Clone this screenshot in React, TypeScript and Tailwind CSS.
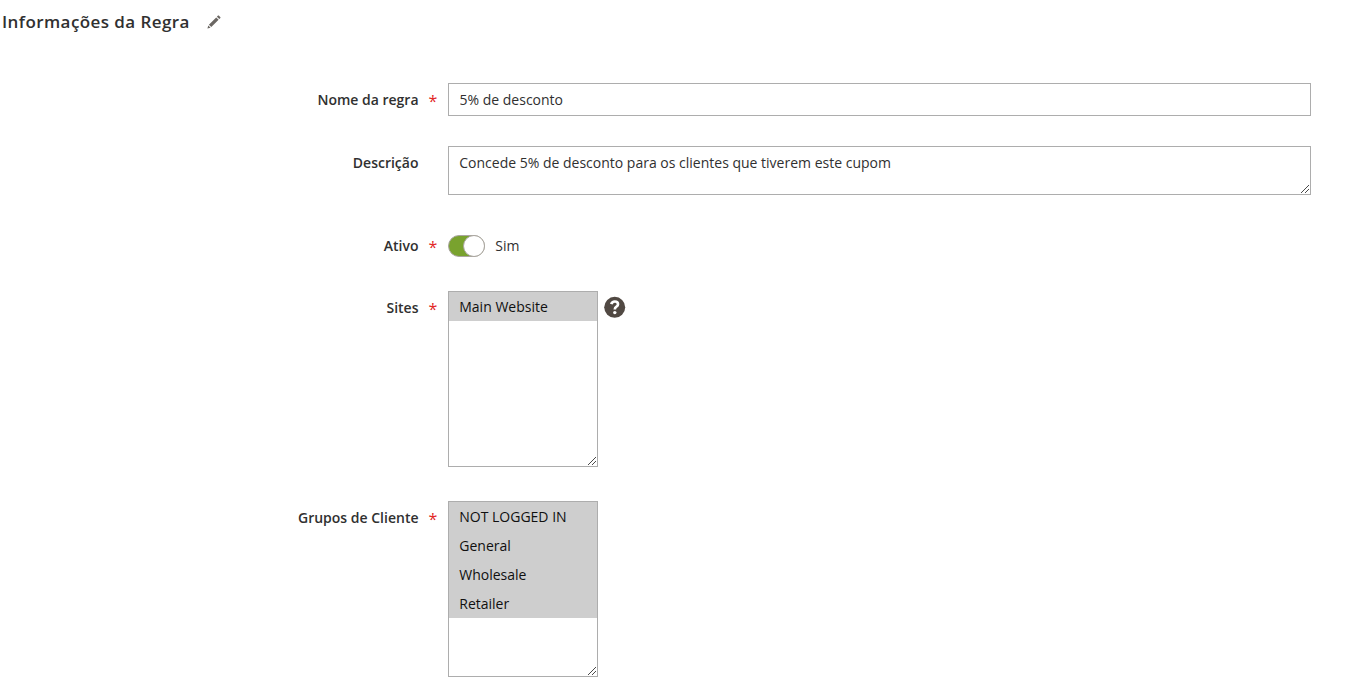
import React from "react";

function Grip() {
  return (
    <svg
      className="pointer-events-none absolute right-0 bottom-0"
      width="9"
      height="9"
      viewBox="0 0 9 9"
      shapeRendering="crispEdges"
      fill="#4a4a4a"
      aria-hidden="true"
    >
      {[0, 1, 2, 3, 4, 5, 6, 7].map((i) => (
        <rect key={i} x={i} y={7 - i} width="1" height="1" />
      ))}
      {[0, 1, 2, 3].map((i) => (
        <rect key={`s${i}`} x={4 + i} y={7 - i} width="1" height="1" />
      ))}
    </svg>
  );
}

type FieldProps = {
  label: string;
  required?: boolean;
  className: string;
  labelClass: string;
  children: React.ReactNode;
};

function Field({ label, required, className, labelClass, children }: FieldProps) {
  return (
    <div className={`flex items-start ${className}`}>
      <div className={`flex w-[448px] shrink-0 justify-end leading-[19px] font-semibold ${labelClass}`}>
        <span>{label}</span>
        <span className="w-[29.5px] pt-[2px] pl-[10px] text-[16px] leading-[19px] font-normal text-[#e22626]">
          {required ? "*" : ""}
        </span>
      </div>
      {children}
    </div>
  );
}

function ListBox({ label, options }: { label: string; options: string[] }) {
  return (
    <div
      role="listbox"
      aria-label={label}
      aria-multiselectable="true"
      className="relative h-[176px] w-[150px] border border-[#adadad] bg-white"
    >
      {options.map((option) => (
        <div
          key={option}
          role="option"
          aria-selected="true"
          className="h-[29px] bg-[#cecece] pl-[10.25px] leading-[29px] text-[#101010]"
        >
          {option}
        </div>
      ))}
      <Grip />
    </div>
  );
}

export default function App() {
  return (
    <main className="h-[685px] w-[1352px] overflow-hidden bg-white font-['Open_Sans',sans-serif] text-[14px] text-[#303030]">
      <header className="flex h-[44px] items-center pl-[2px]">
        <h1 className="text-[17px] leading-[24px] font-semibold tracking-[0.425px]">Informações da Regra</h1>
        <svg className="ml-[17px]" width="14" height="14" viewBox="0 0 14 14" fill="#6b6763" aria-hidden="true">
          <path d="M.4 13.6 1.3 10.5 3.5 12.7ZM1.9 9.7 9.2 2.4 11.6 4.8 4.3 12.1ZM9.9 1.7 11 .6Q11.4 .3 11.8.6L13.4 2.2Q13.7 2.6 13.4 3L12.3 4.1Z" />
        </svg>
      </header>

      <Field label="Nome da regra" required className="mt-[39px]" labelClass="pt-[7px]">
        <input
          aria-label="Nome da regra"
          defaultValue="5% de desconto"
          className="h-[33px] w-[863px] border border-[#adadad] bg-white px-[10.5px] pb-px leading-[19px] outline-none"
        />
      </Field>

      <Field label="Descrição" className="mt-[30px]" labelClass="pt-[7px]">
        <div className="relative flex h-[49px] w-[863px] border border-[#adadad]">
          <textarea
            aria-label="Descrição"
            defaultValue="Concede 5% de desconto para os clientes que tiverem este cupom"
            className="h-full w-full resize-none overflow-hidden bg-transparent px-[10.25px] pt-[6px] leading-[19px] outline-none"
          />
          <Grip />
        </div>
      </Field>

      <Field label="Ativo" required className="mt-[40px]" labelClass="pt-px">
        <div className="flex h-[22px] items-start">
          <div
            role="switch"
            aria-checked="true"
            aria-label="Ativo"
            className="flex h-[22px] w-[37px] justify-end rounded-full border border-[#aaa6a0] bg-[#79a22e]"
          >
            <span className="-mt-px -mr-px h-[22px] w-[22px] rounded-full border border-[#aaa6a0] bg-white" />
          </div>
          <span className="ml-[10.25px] pt-px leading-[19px]">Sim</span>
        </div>
      </Field>

      <Field label="Sites" required className="mt-[34px]" labelClass="pt-[7px]">
        <ListBox label="Sites" options={["Main Website"]} />
        <svg className="mt-[5px] ml-[6px]" width="22" height="22" viewBox="0 0 22 22" aria-hidden="true">
          <circle cx="10.7" cy="11.3" r="10.5" fill="#514943" />
          <path d="M7.3 8.2Q8 5.5 10.8 5.5 14 5.5 14 8.2 14 9.6 12.4 10.6 10.8 11.5 10.8 13.4" fill="none" stroke="#fff" strokeWidth="2.7" />
          <circle cx="10.8" cy="16.6" r="1.7" fill="#fff" />
        </svg>
      </Field>

      <Field label="Grupos de Cliente" required className="mt-[34px]" labelClass="pt-[7px]">
        <ListBox label="Grupos de Cliente" options={["NOT LOGGED IN", "General", "Wholesale", "Retailer"]} />
      </Field>
    </main>
  );
}
